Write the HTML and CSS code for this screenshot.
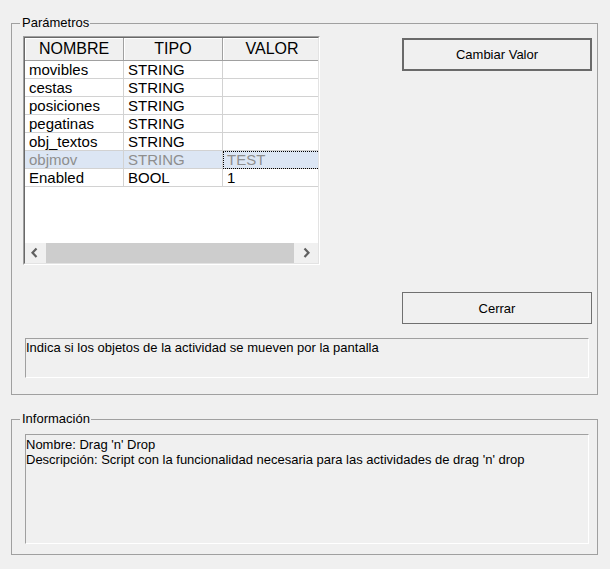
FILE: index.html
```html
<!DOCTYPE html>
<html lang="es">
<head>
<meta charset="utf-8">
<title>Parámetros</title>
<link rel="stylesheet" href="styles.css">
</head>
<body>
<div class="window">
  <section class="group params">
    <span class="group-title">Parámetros</span>
    <div class="params-top">
      <div class="grid-frame">
        <div class="grid-inner">
          <div class="grid-view">
            <table class="grid">
              <colgroup><col class="c"><col class="c"><col class="c"></colgroup>
              <thead>
                <tr><th>NOMBRE</th><th>TIPO</th><th>VALOR</th></tr>
              </thead>
              <tbody>
                <tr><td>movibles</td><td>STRING</td><td></td></tr>
                <tr><td>cestas</td><td>STRING</td><td></td></tr>
                <tr><td>posiciones</td><td>STRING</td><td></td></tr>
                <tr><td>pegatinas</td><td>STRING</td><td></td></tr>
                <tr><td>obj_textos</td><td>STRING</td><td></td></tr>
                <tr class="selected"><td>objmov</td><td>STRING</td><td class="focus">TEST</td></tr>
                <tr><td>Enabled</td><td>BOOL</td><td>1</td></tr>
              </tbody>
            </table>
          </div>
          <div class="hscroll">
            <div class="sb-btn sb-left">
              <svg width="21" height="20" viewBox="0 0 21 20"><polyline points="11.5,5.5 7.5,9.75 11.5,14" fill="none" stroke="#606060" stroke-width="2.2"/></svg>
            </div>
            <div class="sb-thumb"></div>
            <div class="sb-btn sb-right">
              <svg width="24" height="20" viewBox="0 0 24 20"><polyline points="10.5,5.5 14.5,9.75 10.5,14" fill="none" stroke="#606060" stroke-width="2.2"/></svg>
            </div>
          </div>
        </div>
      </div>
      <div class="buttons">
        <button class="btn btn-default">Cambiar Valor</button>
        <button class="btn">Cerrar</button>
      </div>
    </div>
    <div class="textbox desc">Indica si los objetos de la actividad se mueven por la pantalla</div>
  </section>

  <section class="group info">
    <span class="group-title">Información</span>
    <div class="textbox info-box">Nombre: Drag 'n' Drop<br>Descripción: Script con la funcionalidad necesaria para las actividades de drag 'n' drop</div>
  </section>
</div>
</body>
</html>
```

FILE: styles.css
```css
html, body {
  margin: 0;
  background: #f0f0f0;
}
body {
  font-family: "Liberation Sans", Arial, sans-serif;
  font-size: 13px;
  color: #000;
  width: 610px;
  height: 569px;
  overflow: hidden;
}
.window {
  padding: 23px 12px 0 11px;
}
.group {
  position: relative;
  border: 1px solid #a0a0a0;
}
.group-title {
  position: absolute;
  top: -9px;
  left: 8px;
  padding: 0 1px 0 2px;
  line-height: 16px;
  background: #f0f0f0;
}
.params {
  padding: 12px 5px 16px 11px;
}
.params-top {
  display: flex;
  justify-content: space-between;
}
.grid-frame {
  width: 297px;
  height: 229px;
  box-sizing: border-box;
  border: 1px solid;
  border-color: #a0a0a0 #ffffff #ffffff #a0a0a0;
}
.grid-inner {
  height: 100%;
  box-sizing: border-box;
  border: 1px solid;
  border-color: #696969 #e3e3e3 #e3e3e3 #696969;
  background: #fff;
  display: flex;
  flex-direction: column;
}
.grid-view {
  flex: 1;
  overflow: hidden;
}
.grid {
  border-collapse: separate;
  border-spacing: 0;
  table-layout: fixed;
  width: 297px;
  font-size: 15px;
}
.grid th {
  padding: 0;
  line-height: 22px;
  font-size: 16px;
  font-weight: normal;
  background: #f0f0f0;
  border-right: 1px solid #a0a0a0;
  border-bottom: 1px solid #a0a0a0;
  box-shadow: inset 1px 1px 0 #fff;
  text-align: center;
}
.grid td {
  padding: 0 0 0 4px;
  line-height: 17px;
  border-right: 1px solid #d2d2d2;
  border-bottom: 1px solid #d2d2d2;
  white-space: nowrap;
  overflow: hidden;
}
.grid tr.selected td {
  background: #dce6f4;
  color: #8e8e8e;
}
.grid td.focus {
  outline: 1px dotted #000;
  outline-offset: -1px;
}
.hscroll {
  height: 20px;
  display: flex;
  background: #f0f0f0;
}
.sb-btn {
  height: 20px;
}
.sb-left { width: 21px; }
.sb-right { width: 24px; }
.sb-btn svg { display: block; }
.sb-thumb {
  width: 248px;
  background: #cdcdcd;
}
.buttons {
  width: 190px;
  height: 288px;
  box-sizing: border-box;
  padding-top: 2px;
  display: flex;
  flex-direction: column;
  justify-content: space-between;
}
.btn {
  font-family: "Liberation Sans", Arial, sans-serif;
  font-size: 13px;
  color: #000;
  background: #f0f0f0;
  border: 1px solid #707070;
  height: 32px;
  padding: 0;
  margin: 0;
}
.btn-default {
  border: 2px solid #6a6a6a;
  height: 33px;
}
.textbox {
  box-sizing: border-box;
  border: 1px solid;
  border-color: #a0a0a0 #ffffff #ffffff #a0a0a0;
  line-height: 15px;
  padding: 0;
}
.desc {
  margin: 14px 3px 0 2px;
  height: 40px;
  padding-top: 1px;
}
.info {
  margin-top: 24px;
  padding: 14px 8px 10px 13px;
}
.info-box {
  height: 110px;
  padding-top: 2px;
}
```
